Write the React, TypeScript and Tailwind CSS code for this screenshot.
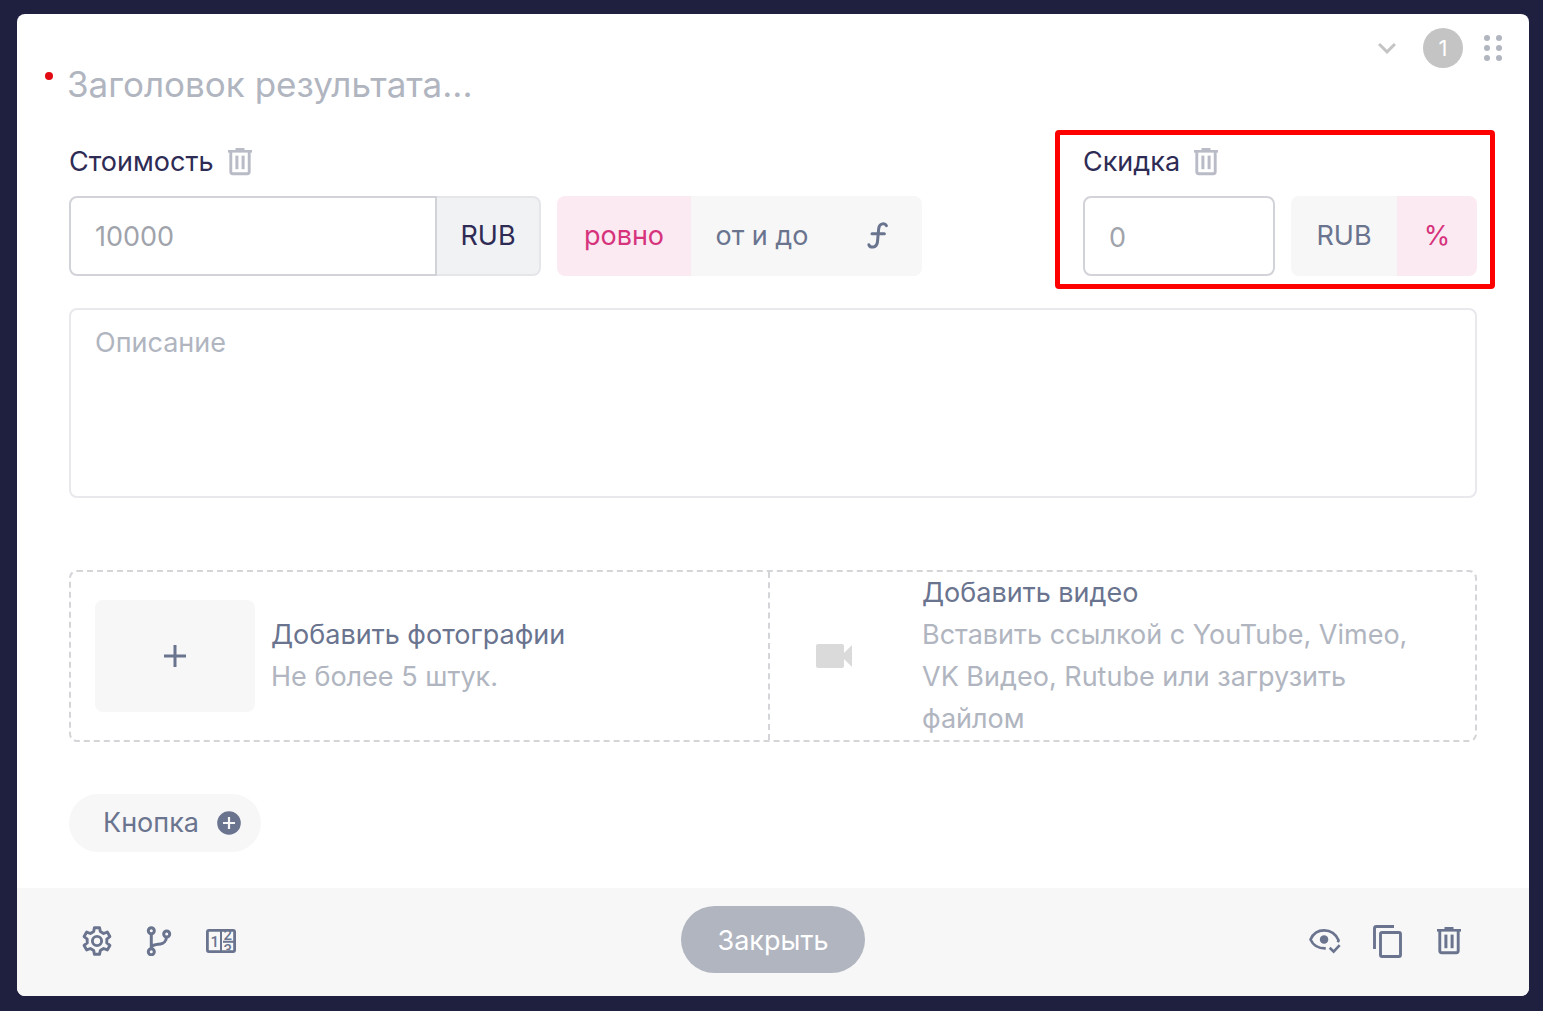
import type { ReactNode } from "react";

function TrashIcon() {
  return (
    <svg width="24" height="28" viewBox="0 0 24 28" fill="currentColor" aria-hidden="true">
      <rect x="7.5" y="0" width="9" height="3" rx="0.6" />
      <rect x="0" y="2" width="24" height="2.6" />
      <path
        d="M2.8 4V23.7Q2.8 25.7 4.8 25.7H19.2Q21.2 25.7 21.2 23.7V4"
        fill="none"
        stroke="currentColor"
        strokeWidth="2.9"
      />
      <rect x="7.4" y="7.6" width="3" height="13.6" />
      <rect x="13.6" y="7.6" width="3" height="13.6" />
    </svg>
  );
}

function FunctionIcon() {
  return (
    <svg width="22" height="28" viewBox="0 0 22 28" fill="none" stroke="currentColor" strokeWidth="3" strokeLinecap="round" aria-hidden="true">
      <path d="M19.4 3.6C18.2 1 12.3 0.6 11.7 6.5L10.5 19.5C10 26.2 3 26.2 1.9 22.8" />
      <path d="M5 11.8H17.4" />
    </svg>
  );
}

function GearIcon() {
  return (
    <svg width="32" height="32" viewBox="-16 -16 32 32" fill="none" stroke="currentColor" strokeWidth="2.9" strokeLinejoin="round" aria-hidden="true">
      <path d="M-2.6 -13.3H2.6L3.3 -9.5L6.6 -7.5L10.3 -8.9L12.9 -4.4L9.8 -1.9V1.9L12.9 4.4L10.3 8.9L6.6 7.5L3.3 9.5L2.6 13.3H-2.6L-3.3 9.5L-6.6 7.5L-10.3 8.9L-12.9 4.4L-9.8 1.9V-1.9L-12.9 -4.4L-10.3 -8.9L-6.6 -7.5L-3.3 -9.5Z" />
      <circle r="4.6" />
    </svg>
  );
}

function BranchIcon() {
  return (
    <svg width="26" height="30" viewBox="0 0 26 30" fill="none" stroke="currentColor" strokeWidth="3" aria-hidden="true">
      <circle cx="5.3" cy="4.7" r="3" />
      <circle cx="20.7" cy="8" r="3" />
      <circle cx="5.3" cy="25.7" r="3" />
      <path d="M5.3 7.5V23M5.5 21C7.5 18 11 18.5 14.5 18C18 17.5 20.3 14.5 20.5 11" />
    </svg>
  );
}

function CounterIcon() {
  return (
    <svg width="30" height="24" viewBox="0 0 30 24" aria-hidden="true">
      <defs>
        <clipPath id="reel">
          <rect x="16" y="2" width="12" height="19.5" />
        </clipPath>
      </defs>
      <rect x="1.4" y="1.4" width="27.2" height="21.2" rx="1.5" fill="none" stroke="currentColor" strokeWidth="2.8" />
      <path d="M15 2V22M17 12.8H28" stroke="currentColor" strokeWidth="2" />
      <g fill="currentColor" fontFamily="Roboto, sans-serif" fontSize="15" fontWeight="500">
        <text x="4.5" y="17.6">1</text>
        <g clipPath="url(#reel)">
          <text x="17.6" y="11.4">2</text>
          <text x="17.6" y="25.8">3</text>
        </g>
      </g>
    </svg>
  );
}

function EyeCheckIcon() {
  return (
    <svg width="34" height="27" viewBox="0 0 34 27" fill="none" stroke="currentColor" strokeWidth="2.8" aria-hidden="true">
      <path d="M30.6 14.2L31.4 12.2C28.5 5.7 22.5 1.7 16 1.7C9.7 1.7 4.3 5.4 1.6 11.3C4.3 17.3 9.8 21 17.8 20.8" />
      <path d="M22 20.2L26.2 24.3L32.6 17.4" />
      <circle cx="16" cy="11.3" r="4.5" fill="currentColor" stroke="none" />
    </svg>
  );
}

function CopyIcon() {
  return (
    <svg width="29" height="33" viewBox="0 0 29 33" fill="none" stroke="currentColor" strokeWidth="2.9" aria-hidden="true">
      <path d="M1.5 24V3.5Q1.5 1.5 3.5 1.5H21" />
      <rect x="7.5" y="7.5" width="20" height="24" rx="1.6" />
    </svg>
  );
}

function FieldLabel({ htmlFor, children }: { htmlFor: string; children: string }) {
  return (
    <div className="flex h-10 items-center gap-3.5">
      <label htmlFor={htmlFor} className="text-[#2e2b55]">
        {children}
      </label>
      <button type="button" aria-label="Удалить" className="text-[#b9bcc6]">
        <TrashIcon />
      </button>
    </div>
  );
}

function Segment({ active, className, children }: { active?: boolean; className: string; children: ReactNode }) {
  const tone = active ? "bg-[#fbeaf2] text-[#d6337c]" : "bg-[#f7f7f7] text-[#6a748f]";
  return (
    <button type="button" aria-pressed={!!active} className={`flex h-20 items-center justify-center ${tone} ${className}`}>
      {children}
    </button>
  );
}

function ToolButton({ label, children }: { label: string; children: ReactNode }) {
  return (
    <button type="button" aria-label={label} className="flex w-8 justify-center">
      {children}
    </button>
  );
}

export default function App() {
  return (
    <div className="min-h-screen bg-[#1f1f3f] pt-3.5 pr-3.5 pb-[15px] pl-[17px] font-['Inter',sans-serif] text-[27px] leading-[42px]">
      <main className="overflow-hidden rounded-lg bg-white">
        <header className="flex items-start justify-between pt-3.5 pr-6 pl-7">
          <div className="flex flex-1 items-start gap-3.5 pt-8">
            <span className="mt-3 size-2 shrink-0 rounded-full bg-[#e30b13]" />
            <input
              aria-label="Заголовок результата"
              placeholder="Заголовок результата..."
              className="h-12 w-full text-[35px] outline-none placeholder:text-[#b0b5bf]"
            />
          </div>
          <div className="flex items-center gap-[18px]">
            <button type="button" aria-label="Свернуть" className="text-[#c4c4c4]">
              <svg width="36" height="36" viewBox="0 0 24 24" fill="currentColor" aria-hidden="true">
                <path d="M16.59 8.59 12 13.17 7.41 8.59 6 10l6 6 6-6z" />
              </svg>
            </button>
            <span className="flex size-10 items-center justify-center rounded-full bg-[#c4c4c4] text-[22px] text-white">1</span>
            <button type="button" aria-label="Переместить" className="text-[#b0b5bf]">
              <svg width="24" height="26" viewBox="0 0 24 26" fill="currentColor" aria-hidden="true">
                <circle cx="6" cy="3" r="3" />
                <circle cx="18" cy="3" r="3" />
                <circle cx="6" cy="13" r="3" />
                <circle cx="18" cy="13" r="3" />
                <circle cx="6" cy="23" r="3" />
                <circle cx="18" cy="23" r="3" />
              </svg>
            </button>
          </div>
        </header>

        <div className="px-[52px] pt-[34px] pb-9">
          <div className="flex justify-between">
            <div>
              <FieldLabel htmlFor="price">Стоимость</FieldLabel>
              <div className="mt-3.5 flex gap-4">
                <div className="flex h-20">
                  <input
                    id="price"
                    placeholder="10000"
                    className="w-[368px] rounded-l-lg border-2 border-[#d2d3d9] px-6 pt-0.5 outline-none placeholder:text-[#a0a3ab]"
                  />
                  <span className="flex w-[104px] items-center justify-center rounded-r-lg border-2 border-l-0 border-[#e5e6ea] bg-[#f1f2f4] text-[#2e2b55]">
                    RUB
                  </span>
                </div>
                <div className="flex overflow-hidden rounded-lg">
                  <Segment active className="w-[134px]">ровно</Segment>
                  <Segment className="w-[142px]">от и до</Segment>
                  <Segment className="w-[89px]">
                    <FunctionIcon />
                  </Segment>
                </div>
              </div>
            </div>

            <div className="relative">
              <FieldLabel htmlFor="discount">Скидка</FieldLabel>
              <div className="mt-3.5 flex gap-4">
                <input
                  id="discount"
                  placeholder="0"
                  className="h-20 w-48 rounded-lg border-2 border-[#d2d3d9] px-6 pt-0.5 outline-none placeholder:text-[#a0a3ab]"
                />
                <div className="flex overflow-hidden rounded-lg">
                  <Segment className="w-[106px]">RUB</Segment>
                  <Segment active className="w-20">%</Segment>
                </div>
              </div>
              <div className="pointer-events-none absolute -top-3 -right-[18px] -bottom-[13px] -left-7 rounded-sm border-[5px] border-[#ff0000]" />
            </div>
          </div>

          <textarea
            aria-label="Описание"
            placeholder="Описание"
            className="mt-8 block h-[190px] w-full resize-none rounded-lg border-2 border-[#e8e8ed] px-6 py-3 outline-none placeholder:text-[#b0b5bf]"
          />

          <div className="mt-[72px] grid grid-cols-[699fr_705fr] rounded-lg border-2 border-dashed border-[#d4d5d8]">
            <div className="flex items-center gap-4 border-r-2 border-dashed border-[#d4d5d8] pl-6">
              <button
                type="button"
                aria-label="Добавить фотографии"
                className="flex h-28 w-40 items-center justify-center rounded-lg bg-[#f7f7f7] text-[#6a748f]"
              >
                <svg width="22" height="22" viewBox="0 0 22 22" stroke="currentColor" strokeWidth="3" aria-hidden="true">
                  <path d="M11 0V22M0 11H22" />
                </svg>
              </button>
              <div>
                <p className="text-[#6a748f]">Добавить фотографии</p>
                <p className="text-[#b0b5bf]">Не более 5 штук.</p>
              </div>
            </div>
            <div className="flex items-center gap-12 pr-10 pl-6">
              <button type="button" aria-label="Добавить видео" className="flex w-20 shrink-0 justify-center text-[#dadada]">
                <svg width="48" height="48" viewBox="0 0 24 24" fill="currentColor" aria-hidden="true">
                  <path d="M17 10.5V7c0-.55-.45-1-1-1H4c-.55 0-1 .45-1 1v10c0 .55.45 1 1 1h12c.55 0 1-.45 1-1v-3.500l4 4v-11l-4 4z" />
                </svg>
              </button>
              <div>
                <p className="text-[#6a748f]">Добавить видео</p>
                <p className="text-[#b0b5bf]">Вставить ссылкой с YouTube, Vimeo, VK Видео, Rutube или загрузить файлом</p>
              </div>
            </div>
          </div>

          <button type="button" className="mt-[52px] flex h-[58px] items-center gap-[18px] rounded-full bg-[#f7f7f7] pr-5 pl-[34px] text-[#6a748f]">
            Кнопка
            <svg width="24" height="24" viewBox="0 0 24 24" aria-hidden="true">
              <circle cx="12" cy="12" r="11.8" fill="currentColor" />
              <path d="M12 6V18M6 12H18" stroke="#f7f7f7" strokeWidth="2.2" />
            </svg>
          </button>
        </div>

        <footer className="grid h-[108px] grid-cols-3 items-center bg-[#f7f7f7] px-16 pb-0.5 text-[#6a748f]">
          <div className="flex items-center gap-[30px]">
            <ToolButton label="Настройки">
              <GearIcon />
            </ToolButton>
            <ToolButton label="Ветвление">
              <BranchIcon />
            </ToolButton>
            <ToolButton label="Счётчик">
              <CounterIcon />
            </ToolButton>
          </div>
          <button type="button" className="mb-1 flex h-[67px] w-[184px] items-center justify-center justify-self-center rounded-full bg-[#b0b5bf] pt-1 text-white">
            Закрыть
          </button>
          <div className="flex items-center justify-end gap-[30px]">
            <ToolButton label="Просмотр">
              <EyeCheckIcon />
            </ToolButton>
            <ToolButton label="Копировать">
              <CopyIcon />
            </ToolButton>
            <ToolButton label="Удалить результат">
              <TrashIcon />
            </ToolButton>
          </div>
        </footer>
      </main>
    </div>
  );
}
